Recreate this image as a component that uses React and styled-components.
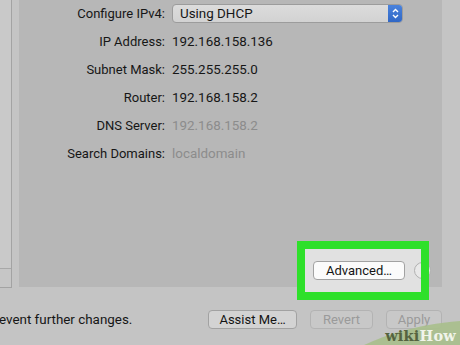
import styled, { createGlobalStyle } from "styled-components";

const GlobalStyle = createGlobalStyle`
  html, body {
    margin: 0;
    padding: 0;
    background: #c4c4c4;
  }
  body {
    font-family: Roboto, "Liberation Sans", sans-serif;
  }
`;

const Screen = styled.div`
  position: relative;
  width: 460px;
  height: 345px;
  overflow: hidden;
  display: flex;
  flex-direction: column;
  background: #c4c4c4;
  color: #161616;
`;

const TopArea = styled.div`
  display: flex;
  height: 288px;
`;

const Sidebar = styled.div`
  width: 12px;
  display: flex;
  flex-direction: column;
  justify-content: flex-end;
  background: #c9c9c9;
  border-right: 1px solid #a3a3a3;
  border-bottom: 1px solid #a3a3a3;
  box-sizing: border-box;
`;

const SidebarFooter = styled.div`
  height: 18px;
  border-top: 1px solid #a8a8a8;
  background: #c6c6c6;
`;

const Panel = styled.div`
  margin-left: 7px;
  width: 423px;
  height: 287px;
  background: #b7b7b7;
  display: flex;
  flex-direction: column;
  justify-content: space-between;
`;

const Form = styled.div`
  display: grid;
  grid-template-columns: 146px 1fr;
  grid-auto-rows: 26px;
  row-gap: 2px;
  column-gap: 7px;
  align-items: center;
  font-size: 13px;
`;

const Label = styled.div`
  text-align: right;
  white-space: nowrap;
`;

const Value = styled.div`
  color: ${(p) => (p.$dim ? "#8c8c8c" : "#161616")};
  white-space: nowrap;
  font-size: 13.4px;
`;

const Popup = styled.div`
  width: 231px;
  height: 19px;
  box-sizing: border-box;
  display: flex;
  align-items: center;
  justify-content: space-between;
  border: 1px solid #9c9c9c;
  border-radius: 4px;
  background: linear-gradient(#dcdcdc, #d2d2d2);
  overflow: hidden;
  padding-left: 7px;
  font-size: 13.4px;
`;

const Stepper = styled.div`
  width: 15px;
  height: 19px;
  margin-right: -1px;
  background: linear-gradient(#4b84de, #2f66c4);
  display: flex;
  align-items: center;
  justify-content: center;
`;

const PanelFooter = styled.div`
  display: flex;
  justify-content: flex-end;
  align-items: center;
  gap: 9px;
  padding: 0 11px 7px 0;
`;

const Button = styled.div`
  position: relative;
  z-index: 2;
  width: ${(p) => p.$w}px;
  height: 19px;
  box-sizing: border-box;
  display: flex;
  align-items: center;
  justify-content: center;
  font-size: 13px;
  border-radius: 4px;
  border: 1px solid ${(p) => (p.$disabled ? "#b3b3b3" : "#a2a2a2")};
  background: ${(p) => p.$bg || (p.$disabled ? "#c8c8c8" : "#d3d3d3")};
  color: ${(p) => (p.$disabled ? "#9a9a9a" : "#141414")};
  white-space: nowrap;
`;

const HelpButton = styled.div`
  position: relative;
  z-index: 2;
  width: 15px;
  height: 15px;
  border-radius: 50%;
  border: 1px solid #b0b0b0;
  background: #e8e8e8;
`;

const Highlight = styled.div`
  position: absolute;
  left: 297px;
  top: 241px;
  width: 132px;
  height: 59px;
  &::before {
    content: "";
    position: absolute;
    inset: 0;
    background: #e1e1e1;
    z-index: 1;
  }
  &::after {
    content: "";
    position: absolute;
    inset: 0;
    border: 8px solid #2ee02a;
    z-index: 3;
  }
`;

const BottomBar = styled.div`
  flex: 1;
  display: flex;
  align-items: flex-start;
  padding-top: 22px;
  font-size: 13px;
`;

const Notice = styled.div`
  flex: 1;
  margin-left: -1px;
  line-height: 19px;
  font-size: 13.4px;
`;

const BottomButtons = styled.div`
  display: flex;
  gap: 13px;
  margin-right: 18px;
`;

const Logo = styled.div`
  position: absolute;
  right: 0;
  bottom: 0;
  width: 96px;
  height: 28px;
  z-index: 4;
`;

const LogoText = styled.div`
  position: absolute;
  right: 4px;
  bottom: 1px;
  font-family: "DejaVu Serif", "Liberation Serif", serif;
  font-weight: bold;
  font-size: 14.5px;
  letter-spacing: 0.2px;
`;

const Wiki = styled.span`
  color: #55633f;
`;

const How = styled.span`
  color: #f1f4ea;
`;

const rows = [
  ["IP Address:", "192.168.158.136"],
  ["Subnet Mask:", "255.255.255.0"],
  ["Router:", "192.168.158.2"],
  ["DNS Server:", "192.168.158.2", true],
  ["Search Domains:", "localdomain", true],
];

export default function App() {
  return (
    <Screen>
      <GlobalStyle />
      <TopArea>
        <Sidebar>
          <SidebarFooter />
        </Sidebar>
        <Panel>
          <Form>
            <Label>Configure IPv4:</Label>
            <Popup>
              <span>Using DHCP</span>
              <Stepper>
                <svg width="9" height="13" viewBox="0 0 9 13">
                  <path d="M2 5 L4.5 2.5 L7 5 M2 8 L4.5 10.5 L7 8" fill="none" stroke="#fff" strokeWidth="1.4" />
                </svg>
              </Stepper>
            </Popup>
            {rows.map(([l, v, dim]) => (
              <>
                <Label key={l}>{l}</Label>
                <Value key={l + "v"} $dim={dim}>{v}</Value>
              </>
            ))}
          </Form>
          <PanelFooter>
            <Button $bg="#fbfbfb" $w={92}>Advanced…</Button>
            <HelpButton />
          </PanelFooter>
        </Panel>
      </TopArea>
      <BottomBar>
        <Notice>event further changes.</Notice>
        <BottomButtons>
          <Button $w={89}>Assist Me…</Button>
          <Button $disabled $w={63}>Revert</Button>
          <Button $disabled $w={56}>Apply</Button>
        </BottomButtons>
      </BottomBar>
      <Highlight />
      <Logo>
        <svg width="96" height="28" viewBox="0 0 96 28">
          <path d="M0 28 C 22 18, 50 8, 96 4 L96 28 Z" fill="#a9bf8c" opacity="0.9" />
        </svg>
        <LogoText>
          <Wiki>wiki</Wiki>
          <How>How</How>
        </LogoText>
      </Logo>
    </Screen>
  );
}
